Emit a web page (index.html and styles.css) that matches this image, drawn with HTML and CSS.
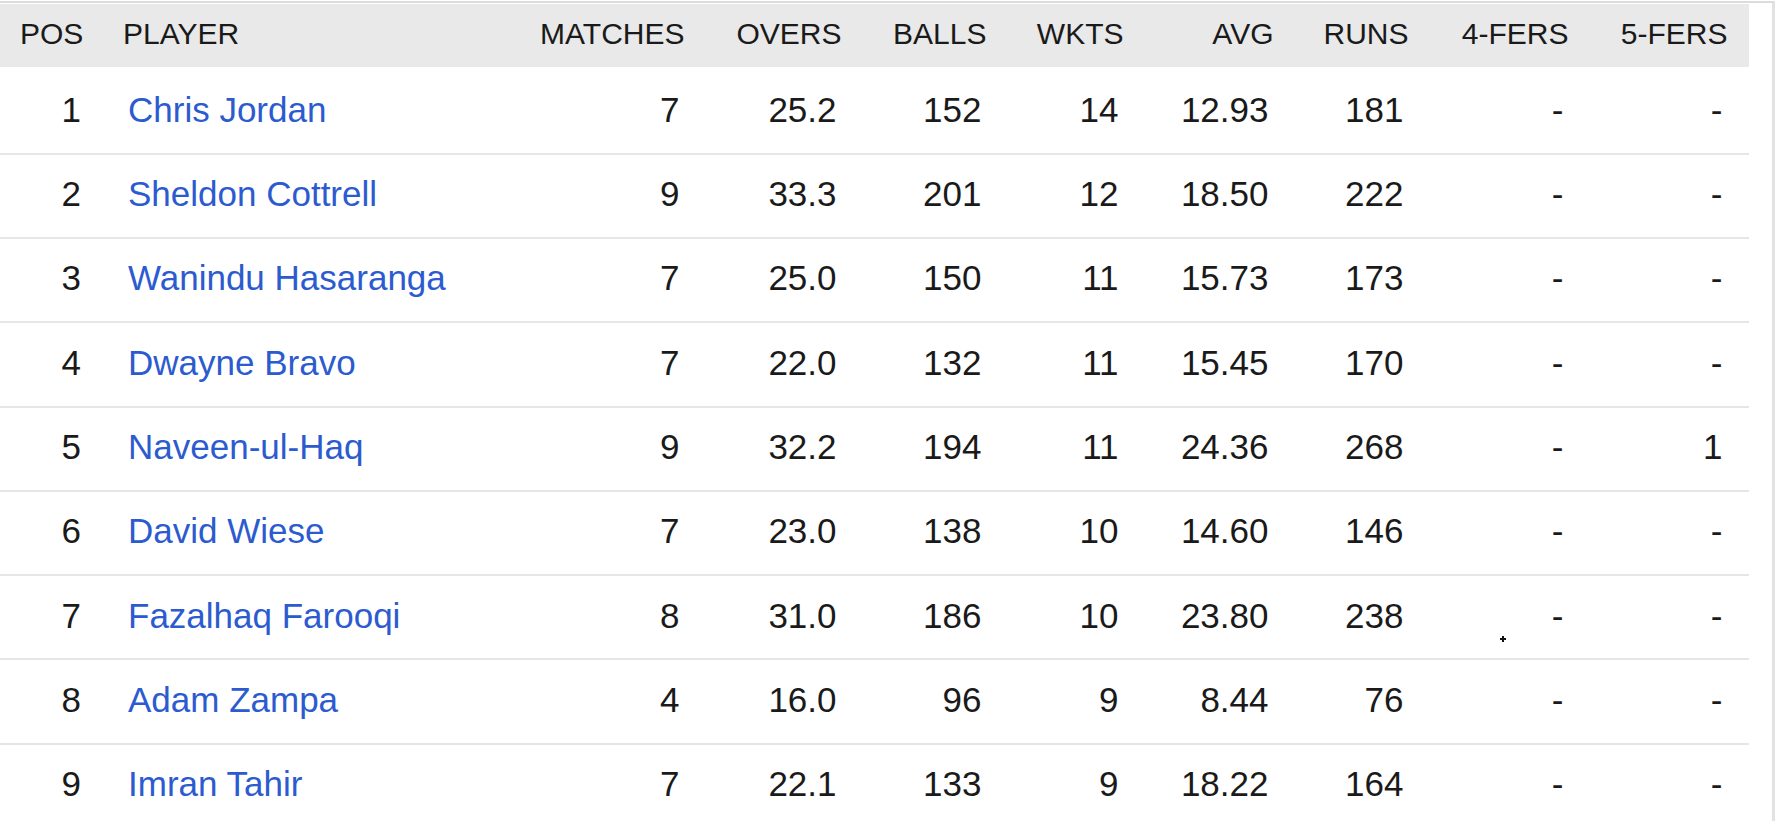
FILE: index.html
```html
<!DOCTYPE html>
<html lang="en">
<head>
<meta charset="utf-8">
<title>Most wickets</title>
<link rel="stylesheet" href="styles.css">
</head>
<body>
<div class="board">
  <div class="stats">
    <div class="head">
      <div class="h-pos">POS</div>
      <div class="h-player">PLAYER</div>
      <div class="h-num">MATCHES</div>
      <div class="h-num">OVERS</div>
      <div class="h-num">BALLS</div>
      <div class="h-num">WKTS</div>
      <div class="h-num">AVG</div>
      <div class="h-num">RUNS</div>
      <div class="h-num">4-FERS</div>
      <div class="h-num">5-FERS</div>
    </div>
    <div class="row first">
      <div class="pos">1</div><div class="player"><a href="#">Chris Jordan</a></div>
      <div class="num">7</div><div class="num">25.2</div><div class="num">152</div><div class="num">14</div><div class="num">12.93</div><div class="num">181</div><div class="num">-</div><div class="num">-</div>
    </div>
    <div class="row">
      <div class="pos">2</div><div class="player"><a href="#">Sheldon Cottrell</a></div>
      <div class="num">9</div><div class="num">33.3</div><div class="num">201</div><div class="num">12</div><div class="num">18.50</div><div class="num">222</div><div class="num">-</div><div class="num">-</div>
    </div>
    <div class="row">
      <div class="pos">3</div><div class="player"><a href="#">Wanindu Hasaranga</a></div>
      <div class="num">7</div><div class="num">25.0</div><div class="num">150</div><div class="num">11</div><div class="num">15.73</div><div class="num">173</div><div class="num">-</div><div class="num">-</div>
    </div>
    <div class="row">
      <div class="pos">4</div><div class="player"><a href="#">Dwayne Bravo</a></div>
      <div class="num">7</div><div class="num">22.0</div><div class="num">132</div><div class="num">11</div><div class="num">15.45</div><div class="num">170</div><div class="num">-</div><div class="num">-</div>
    </div>
    <div class="row">
      <div class="pos">5</div><div class="player"><a href="#">Naveen-ul-Haq</a></div>
      <div class="num">9</div><div class="num">32.2</div><div class="num">194</div><div class="num">11</div><div class="num">24.36</div><div class="num">268</div><div class="num">-</div><div class="num">1</div>
    </div>
    <div class="row">
      <div class="pos">6</div><div class="player"><a href="#">David Wiese</a></div>
      <div class="num">7</div><div class="num">23.0</div><div class="num">138</div><div class="num">10</div><div class="num">14.60</div><div class="num">146</div><div class="num">-</div><div class="num">-</div>
    </div>
    <div class="row marked">
      <div class="pos">7</div><div class="player"><a href="#">Fazalhaq Farooqi</a></div>
      <div class="num">8</div><div class="num">31.0</div><div class="num">186</div><div class="num">10</div><div class="num">23.80</div><div class="num">238</div><div class="num">-</div><div class="num">-</div>
      <span class="cursor-mark"></span>
    </div>
    <div class="row">
      <div class="pos">8</div><div class="player"><a href="#">Adam Zampa</a></div>
      <div class="num">4</div><div class="num">16.0</div><div class="num">96</div><div class="num">9</div><div class="num">8.44</div><div class="num">76</div><div class="num">-</div><div class="num">-</div>
    </div>
    <div class="row">
      <div class="pos">9</div><div class="player"><a href="#">Imran Tahir</a></div>
      <div class="num">7</div><div class="num">22.1</div><div class="num">133</div><div class="num">9</div><div class="num">18.22</div><div class="num">164</div><div class="num">-</div><div class="num">-</div>
    </div>
  </div>
</div>
</body>
</html>
```

FILE: styles.css
```css
html, body {
  margin: 0;
  padding: 0;
  background: #ffffff;
  overflow: hidden;
}

body {
  font-family: "Liberation Sans", Arial, sans-serif;
  color: #1a1a1a;
}

.board {
  box-sizing: border-box;
  width: 1775px;
  height: 820px;
  margin-top: 1px;
  padding-top: 1px;
  border-top: 2px solid #dcdcdc;
  border-right: 3px solid #e2e2e2;
}

.stats {
  width: 1749px;
}

.head,
.row {
  display: grid;
  grid-template-columns: 100px 400px 184.5px 157px 145px 137px 150px 135px 160px 159px;
  padding-right: 21.5px;
  align-items: center;
  box-sizing: border-box;
}

.head {
  height: 63px;
  padding-bottom: 4px;
  background: #e9e9e9;
  font-size: 30px;
  color: #1a1a1a;
  white-space: nowrap;
}

.h-pos {
  padding-left: 20px;
}

.h-player {
  padding-left: 23px;
}

.h-num {
  text-align: right;
}

.row {
  position: relative;
  height: 84.3px;
  padding-bottom: 3.5px;
  border-bottom: 2px solid #e6e6e6;
  font-size: 35px;
  white-space: nowrap;
}

.row.first {
  height: 87.7px;
  padding-bottom: 0;
}

.pos {
  text-align: right;
  padding-right: 19px;
}

.player {
  padding-left: 28px;
}

.player a {
  color: #2c5bcf;
  text-decoration: none;
}

.num {
  text-align: right;
  padding-right: 5px;
}

.cursor-mark {
  position: absolute;
  left: 1500px;
  top: 60px;
  width: 6px;
  height: 6px;
  background:
    linear-gradient(#111, #111) center / 6px 2px no-repeat,
    linear-gradient(#111, #111) center / 2px 6px no-repeat;
}
```
